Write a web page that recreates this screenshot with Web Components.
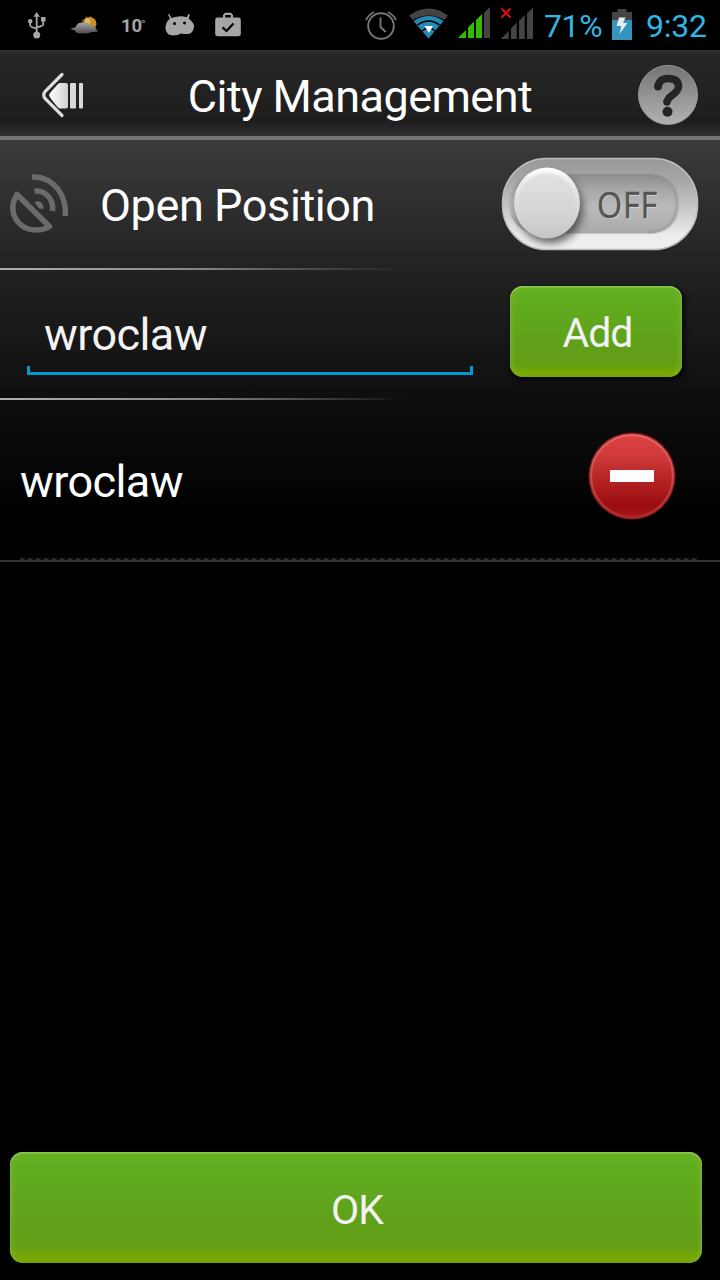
<!DOCTYPE html>
<html lang="en">
<head>
<meta charset="utf-8">
<title>City Management</title>
<style>
html,body{margin:0;height:100%;background:#000;overflow:hidden}
body{font-family:Roboto,"Noto Sans",sans-serif;color:#fff}
</style>
</head>
<body>
<city-app></city-app>
<script>
function define(name, html) {
  const t = document.createElement('template');
  t.innerHTML = html;
  customElements.define(name, class extends HTMLElement {
    constructor() {
      super();
      this.attachShadow({mode: 'open'}).append(t.content.cloneNode(true));
    }
  });
}

define('status-bar', `
<style>
:host{display:flex;height:50px;background:#000;color:#33b5e5;font-size:32px;line-height:52px;white-space:nowrap}
svg{display:block;flex:none}
.temp{flex:none;width:42px;text-indent:1px;color:#a6a6a6;font-size:18.5px;font-weight:700;line-height:52px;letter-spacing:-.2px}
.temp span{margin-left:-1px;letter-spacing:0;font-size:15px;vertical-align:1px}
.gap{flex:1}
.bat{width:64px;flex:none;letter-spacing:-.4px}
.time{width:74px;flex:none;letter-spacing:-.2px}
</style>
<svg width="120" height="50" viewBox="0 0 120 50">
 <defs><linearGradient id="cl" x1="0" y1="0" x2="0" y2="1"><stop offset="0" stop-color="#a9a9a9"/><stop offset="1" stop-color="#4b4b4b"/></linearGradient></defs>
 <g fill="none" stroke="#a6a6a6" stroke-width="1.800"><path d="M36.700 15V34M30.200 21v4.500q0 1.500 6.300 3.200M43.200 20v4.500q0 1.500-6.300 2.800"/></g>
 <g fill="#a6a6a6"><path d="M36.700 12l3.200 4.800h-6.400z"/><circle cx="30.200" cy="21.300" r="2.200"/><path d="M41 17h4.500v4.500H41z"/><circle cx="36.700" cy="35" r="3.500"/></g>
 <path d="M82 20l3-1.500 1-2.500 2 1.500 3-1.500 1.500 2.300 3 1-.5 2.700 2 2-1.500 2.500 1 3-3 2-9 1-4-6z" fill="#7a4b16"/>
 <circle cx="90" cy="23.500" r="6.300" fill="#c98d24"/><circle cx="87.500" cy="21" r="3" fill="#d9b85f"/>
 <path d="M70 28.800q5-1 6-2.300Q78 22 82 23q5-2 8 2 4-.5 5 3l3 3.500q-4 .5-6 .5-5 2-10 1.500-6 .5-7-3z" fill="url(#cl)"/>
</svg>
<div class="temp">10<span>˚</span></div>
<svg width="88" height="50" viewBox="162 0 88 50">
 <path fill="#a6a6a6" d="M168 14.500l1.300-.5 2.200 4Q180 15 187 17.200l1.300-3.200 1.500.6-1 4.200Q194 22 194 27q-1 6.500-6 7-4 .3-7-.5-3 2-8 2-7-.5-7.500-7-.2-6 4.500-10z"/>
 <circle cx="174.500" cy="23.500" r="1.500" fill="#000"/><circle cx="184.500" cy="23" r="1.500" fill="#000"/>
 <path fill="#a6a6a6" fill-rule="evenodd" d="M217.500 17.500H223V15l2-2.300h6L233 15v2.500h5.500q2.300 0 2.300 2.300V34q0 2.300-2.300 2.300h-21q-2.300 0-2.300-2.300V19.800q0-2.300 2.300-2.300zM225.200 15v2.500h5.600V15z"/>
 <path d="M222.500 27.300l4 3.700 7-7.500" fill="none" stroke="#050505" stroke-width="2.300"/>
</svg>
<span class="gap"></span>
<svg width="182" height="50" viewBox="362 0 182 50">
 <g fill="none" stroke="#777" stroke-width="1.900"><circle cx="381" cy="26" r="12.800"/><path d="M380.500 17.500V27l5.300 5M366 20q2.500-5 8-8M388 12q5.500 3 8 8"/></g>
 <path d="M409 15.500Q429 1.500 448 15.500L428.500 38.500z" fill="#444"/>
 <path d="M412 20.500Q429 10.500 445 20.500L428.500 38.500z" fill="#000"/>
 <path d="M413.500 21Q429 11 443.500 21L428.500 38.500z" fill="#2489b4"/>
 <path d="M417.500 25Q429 17 439.500 25" fill="none" stroke="#000" stroke-width="1.500"/>
 <path d="M422 31Q429 25 435 31" fill="none" stroke="#000" stroke-width="1.300"/>
 <path d="M424.500 26h8.500l-4 7z" fill="#fff"/>
 <path d="M458 38l8-8v8zM468 38V27.500l6-6V38zM476 38V20l6-6V38z" fill="#3b0"/><path d="M484 38V13l6-6V38z" fill="#444"/>
 <path d="M501 39l7.700-8v8zM511 39V28.500l5.700-6V39zM519 39V21l5.700-6V39zM527 39V13.500l6-6V39z" fill="#444"/>
 <path d="M501.500 8.500l9 9M510.500 8.500l-9 9" stroke="#d40f0f" stroke-width="2.200"/>
</svg>
<span class="bat">71%</span>
<svg width="38" height="50" viewBox="608 0 38 50">
 <path d="M612 12h5.500V9h9v3h5.500v8h-20z" fill="#444"/><path d="M612 20h20v20h-20z" fill="#3494bd"/>
 <path d="M619 17.500h6.500l-2.500 5.500h4.500l-8 11 1.800-8H616.500z" fill="#e6edf0"/>
</svg>
<span class="time">9:32</span>`);

define('title-bar', `
<style>
:host{display:flex;box-sizing:border-box;height:90px;border-bottom:4px solid #757575;
 background:linear-gradient(#343434,#262626 5%,#222 45%,#1d1d1d 83%,#303030 100%)}
h1{flex:1;margin:0;font-weight:400;font-size:45px;letter-spacing:-.55px;line-height:94px;text-align:center;white-space:nowrap}
svg{display:block;flex:none}
</style>
<svg width="110" height="86" viewBox="0 50 110 86">
 <defs><linearGradient id="a" x1="0" x2="1"><stop offset="0" stop-color="#fff"/><stop offset="1" stop-color="#d0d0d0"/></linearGradient></defs>
 <path d="M62 74.500L45.500 91q-3.500 4 0 8L62 115.500" fill="none" stroke="#ddd" stroke-width="3.200" stroke-linecap="round"/>
 <path d="M49 95q0-1.500 9-11 1-1 2-1h6q2 0 2 2v21.500q0 2-2 2H60q-1 0-2-1-9-10.500-9-12.500z" fill="url(#a)"/>
 <rect x="70" y="83" width="6" height="25.500" rx="1" fill="#d8d8d8"/><rect x="79" y="83" width="4" height="25.500" rx="1" fill="#d8d8d8"/>
</svg>
<h1><slot></slot></h1>
<svg width="110" height="86" viewBox="610 50 110 86">
 <defs><linearGradient id="h" x1="0" y1="0" x2="0" y2="1"><stop offset="0" stop-color="#747474"/><stop offset="1" stop-color="#b2b2b2"/></linearGradient></defs>
 <circle cx="668" cy="95" r="29.500" fill="url(#h)" stroke="#999" stroke-width="1"/>
 <path d="M658 86.500q1.500-8 10-8 10.500 0 10.500 8 0 4-6 8.500-5.500 4-5.500 7.500" fill="none" stroke="#242424" stroke-width="7.500"/>
 <circle cx="658" cy="86.500" r="3.900" fill="#242424"/><circle cx="667" cy="102" r="3.700" fill="#242424"/>
 <circle cx="667.500" cy="111.800" r="5" fill="#242424"/>
</svg>`);

define('setting-row', `
<style>
:host{display:flex;position:relative;box-sizing:border-box;height:130px;
 border-bottom:2px solid;border-image:linear-gradient(90deg,#b0b0b0,#858585 28%,#555 40%,rgba(60,60,60,0) 56%) 1}
</style><slot></slot>`);

define('position-label', `
<style>
:host{display:flex;flex:1;font-size:45px;letter-spacing:-.4px;line-height:132px;white-space:nowrap}
svg{display:block;flex:none}
</style>
<svg width="100" height="128" viewBox="0 140 100 128">
 <g fill="none" stroke="#6b6b6b" stroke-width="5.500" stroke-linecap="butt" stroke-linejoin="round">
 <path d="M17 194.500Q9 207 16 219.500 23 230 36 230 44 230 49.500 226.500z"/>
 <path d="M32 177Q47 176 58 189 66 200 65.500 216M34.500 191Q44 190 49.500 198 53.500 204 52.500 211"/></g>
 <path d="M34.500 202Q43 199 43.500 209L39 208.500z" fill="#6b6b6b"/>
</svg><slot></slot>`);

define('toggle-switch', `
<style>
:host{display:block;box-sizing:border-box;width:198px;height:94px;margin:17px 21px 0 0}
svg{display:block}text{font-family:"Open Sans",sans-serif;font-size:36px;letter-spacing:1px}
</style>
<svg width="198" height="94" viewBox="501 157 198 94">
 <defs>
 <linearGradient id="o" x1="0" y1="0" x2="0" y2="1"><stop offset="0" stop-color="#999797"/><stop offset=".25" stop-color="#a8a6a6"/><stop offset=".65" stop-color="#d4d4d4"/><stop offset=".85" stop-color="#ededed"/><stop offset="1" stop-color="#f0f0f0"/></linearGradient>
 <linearGradient id="i" x1="0" y1="0" x2="0" y2="1"><stop offset="0" stop-color="#8d8c8c"/><stop offset=".25" stop-color="#a6a6a6"/><stop offset=".55" stop-color="#bbb"/><stop offset="1" stop-color="#aaa"/></linearGradient>
 <linearGradient id="k" x1="0" y1="0" x2="0" y2="1"><stop offset="0" stop-color="#fff"/><stop offset=".25" stop-color="#e8e8e8"/><stop offset="1" stop-color="#c4c4c4"/></linearGradient>
 <linearGradient id="m" x1="0" y1="0" x2="0" y2="1"><stop offset="0" stop-color="#e2e2e2"/><stop offset="1" stop-color="#cdcdcd"/></linearGradient>
 <filter id="b" x="-30%" y="-30%" width="160%" height="160%"><feGaussianBlur stdDeviation="4"/></filter>
 <filter id="e"><feGaussianBlur stdDeviation="1"/></filter>
 <clipPath id="c"><rect x="503" y="159" width="194" height="90" rx="43"/></clipPath>
 </defs>
 <rect x="502.500" y="158.500" width="195" height="91" rx="44" fill="url(#o)" stroke="#bdbdbd" stroke-width="1.500"/>
 <rect x="509" y="174" width="169.500" height="59.500" rx="28" fill="url(#i)"/>
 <path d="M648 175.500Q677 176 677 204 677 232 648 232" fill="none" stroke="#8d8d8d" stroke-width="2.500" opacity=".6" filter="url(#e)"/>
 <g clip-path="url(#c)"><ellipse cx="550" cy="209" rx="33" ry="34" fill="#3a3a3a" opacity=".8" filter="url(#b)"/></g>
 <ellipse cx="547" cy="203" rx="33" ry="35.500" fill="url(#k)"/>
 <ellipse cx="547" cy="202" rx="28" ry="29" fill="url(#m)" filter="url(#e)"/>
 <text x="598" y="219" fill="#d5d5d5" textLength="61" lengthAdjust="spacingAndGlyphs">OFF</text>
 <text x="597" y="218" fill="#555" stroke="#555" stroke-width=".5" textLength="61" lengthAdjust="spacingAndGlyphs">OFF</text>
</svg>`);

define('city-field', `
<style>
:host{display:block;position:relative;box-sizing:border-box;width:446px;height:105px;margin-left:27px;padding-left:17px;
 font-size:45px;letter-spacing:-.6px;line-height:130px;color:#f3f3f3}
i{position:absolute;left:0;bottom:0;box-sizing:border-box;width:100%;height:9px;border:3px solid #0099cc;border-top:0}
</style><slot></slot><i></i>`);

define('green-button', `
<style>
:host{display:block;box-sizing:border-box;border-radius:13px;text-align:center;font-size:41px;letter-spacing:-1px;text-indent:2px;color:#f2f2f2;
 background:linear-gradient(#63b123,#60aa1e 25%,#609e18 75%,#659f13 86%,#7aa900 97%,#6c9000);
 box-shadow:inset 0 1.500px 1px #8cc95a,inset 3px 0 6px -2px #80b62c,inset -3px 0 6px -2px #80b62c,2px 2px 4px 1px rgba(0,0,0,.7)}
</style><slot></slot>`);

define('city-row', `
<style>
:host{display:flex;position:relative;box-sizing:border-box;height:162px;border-bottom:2px solid #303030;font-size:45px;letter-spacing:-.6px;line-height:164px}
span{flex:1;padding-left:20px}
svg{display:block}
i{position:absolute;left:20px;right:23px;bottom:0;height:2px;background:repeating-linear-gradient(90deg,#282828 0 4px,#060606 5px 7px,#282828 8px)}
</style>
<span><slot></slot></span>
<svg width="140" height="160" viewBox="580 400 140 160">
 <defs><linearGradient id="r" x1="0" y1="0" x2="0" y2="1"><stop offset="0" stop-color="#de4141"/><stop offset=".25" stop-color="#d03a3b"/><stop offset=".85" stop-color="#9b0c0e"/><stop offset="1" stop-color="#a41618"/></linearGradient>
 <linearGradient id="s" x1="0" y1="0" x2="0" y2="1"><stop offset="0" stop-color="#e06a6a"/><stop offset="1" stop-color="#ac2c2e"/></linearGradient></defs>
 <circle cx="632" cy="476" r="43.500" fill="#8e1b1d"/><circle cx="632" cy="476" r="41" fill="url(#r)" stroke="url(#s)" stroke-width="2.200"/>
 <rect x="610" y="470" width="44" height="12" fill="#fff"/>
</svg><i></i>`);

define('city-app', `
<style>
:host{display:flex;flex-direction:column;width:720px;height:1280px;background:#000}
main{flex:1;background:linear-gradient(#3b3b3b 0,#222 129px,#0e0e0e 260px,#000 380px)}
.add{width:172px;height:91px;margin:16px 0 0 37px;line-height:95px;text-indent:3px}
.ok{height:111px;margin:0 18px 17px 10px;line-height:117px}
</style>
<status-bar></status-bar>
<title-bar>City Management</title-bar>
<main>
<setting-row><position-label>Open Position</position-label><toggle-switch></toggle-switch></setting-row>
<setting-row><city-field>wroclaw</city-field><green-button class="add">Add</green-button></setting-row>
<city-row>wroclaw</city-row>
</main>
<green-button class="ok">OK</green-button>`);
</script>
</body>
</html>
